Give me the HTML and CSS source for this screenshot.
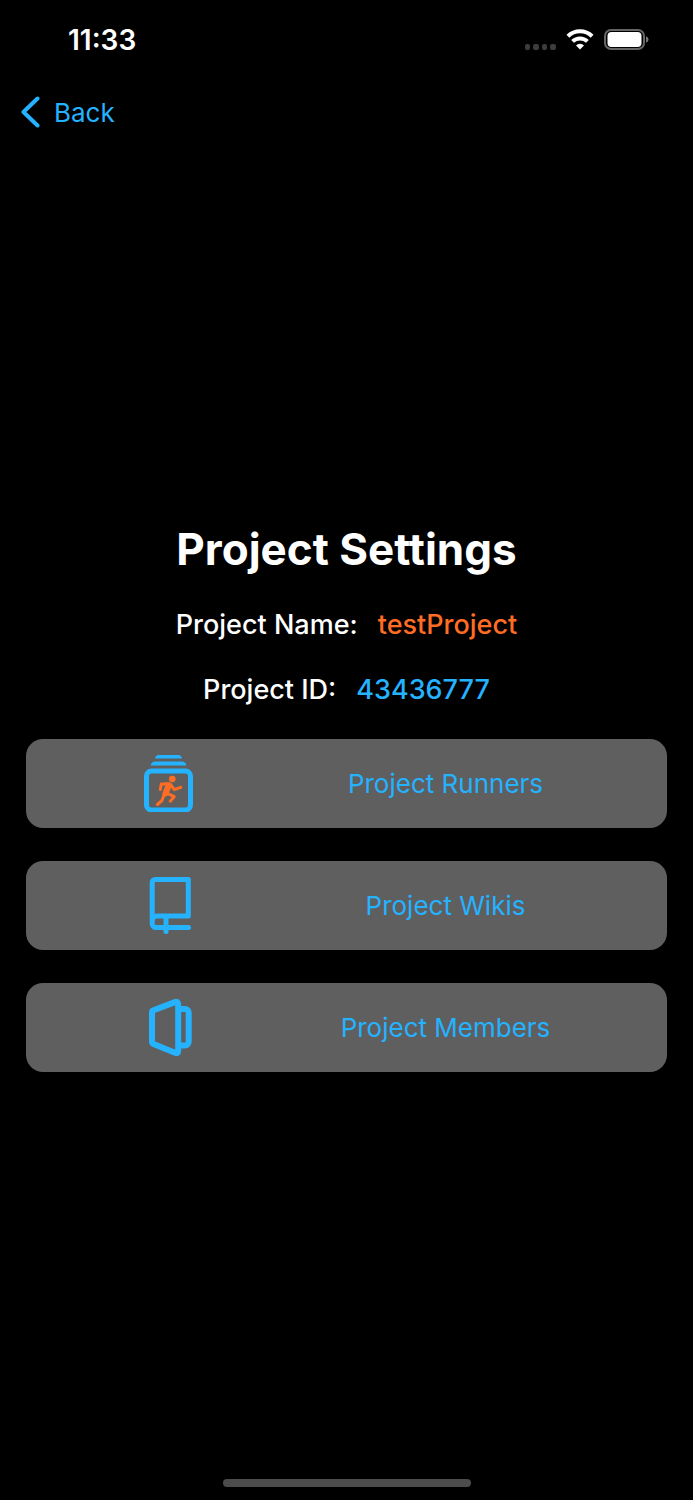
FILE: index.html
```html
<!DOCTYPE html>
<html lang="en">
<head>
<meta charset="utf-8">
<meta name="viewport" content="width=device-width, initial-scale=1">
<title>Project Settings</title>
<link rel="stylesheet" href="styles.css">
</head>
<body>
<div class="screen">
  <header class="status">
    <time class="clock">11:33</time>
    <div class="indicators">
      <svg class="signal" width="32" height="6" viewBox="0 0 32 6" aria-hidden="true">
        <rect x="1" y="0" width="5" height="6" rx="2"/><rect x="9" y="0" width="6" height="6" rx="2"/><rect x="18" y="0" width="5" height="6" rx="2"/><rect x="26" y="0" width="6" height="6" rx="2"/>
      </svg>
      <svg class="wifi" width="28" height="22" viewBox="0 0 28 22" aria-hidden="true">
        <path d="M1.900 7.200a17.300 17.300 0 0 1 24.200 0M6.600 12.400a10.600 10.600 0 0 1 14.800 0"/>
        <path class="wifi-dot" d="M14 20.400l-4-4a5.600 5.600 0 0 1 8 0z"/>
      </svg>
      <svg class="battery" width="45" height="22" viewBox="0 0 45 22" aria-hidden="true">
        <rect class="battery-case" x="1" y="1" width="39" height="19" rx="6"/>
        <rect class="battery-level" x="3.500" y="3" width="34" height="15" rx="4"/>
        <path class="battery-cap" d="M42 7.200q2.500 1 2.500 3.300t-2.500 3.300z"/>
      </svg>
    </div>
  </header>
  <nav class="nav">
    <button class="back" type="button">
      <svg width="20" height="32" viewBox="0 0 20 32" aria-hidden="true"><path d="M17.500 2.500L3.500 16l14 13.500"/></svg>
      <span class="label">Back</span>
    </button>
  </nav>
  <main class="content">
    <h1 class="title">Project Settings</h1>
    <dl class="facts">
      <div class="fact"><dt>Project Name:</dt><dd class="name">testProject</dd></div>
      <div class="fact"><dt>Project ID:</dt><dd class="id">43436777</dd></div>
    </dl>
    <div class="actions">
      <button class="action" type="button">
        <svg class="icon" viewBox="8 10 61 57" aria-hidden="true">
          <path class="fill" d="M25 13.500q.7-3.500 3.500-3.500h20q2.800 0 3.500 3.500zM20.500 20.500q1.200-4 4-4h28q2.800 0 4 4z"/>
          <rect class="line" x="16.500" y="26" width="44" height="39" rx="5"/>
          <circle class="runner-head" cx="42.300" cy="34" r="3.300"/>
          <path class="runner" d="M30.300 44.500l1-5.500 6-.2 3.200.7 3.800 5.200 6.400-2.300"/>
          <path class="runner torso" d="M38.700 40.300l-3.200 8.200"/>
          <path class="runner" d="M36.500 48l7.700 3.700-4 4.500M34.500 48.500l-2.500 7-4.600 4"/>
        </svg>
        <span class="label">Project Runners</span>
      </button>
      <button class="action" type="button">
        <svg class="icon" viewBox="8 12 61 57" aria-hidden="true">
          <path class="line" d="M58.500 62.500H26a3.800 3.800 0 0 1-3.800-3.800V17.500a3 3 0 0 1 3-3H58.300V51H27a4.600 4.600 0 0 0-4.600 4.600M36 51v15.500"/>
        </svg>
        <span class="label">Project Wikis</span>
      </button>
      <button class="action" type="button">
        <svg class="icon" viewBox="8 11 61 57" aria-hidden="true">
          <path class="line bold" d="M22 24.500q0-1.500 1.500-2.200L45 14.100q3.200-1 3.200 2.200v46.500q0 3.200-3.200 2L23.500 56q-1.500-.7-1.500-2.200zM49 21h6a3.700 3.700 0 0 1 3.700 3.700v29a3.700 3.700 0 0 1-3.700 3.700h-6"/>
        </svg>
        <span class="label">Project Members</span>
      </button>
    </div>
  </main>
  <footer class="home"><div class="home-bar"></div></footer>
</div>
</body>
</html>
```
FILE: styles.css
```css
* { box-sizing: border-box; }
body {
  margin: 0;
  background: #000;
  color: #fff;
  font: 400 27px/32px Inter, "Liberation Sans", sans-serif;
}
button {
  border: 0;
  background: none;
  color: #25b2ff;
  font: inherit;
  font-size: 26px;
  cursor: pointer;
}
.screen {
  min-height: 100vh;
  display: flex;
  flex-direction: column;
}
.status {
  height: 80px;
  padding: 0 44px 0 68px;
  display: flex;
  align-items: center;
  justify-content: space-between;
}
.clock { font-size: 28px; font-weight: 600; }
.indicators { display: flex; align-items: center; gap: 10px; }
.signal { fill: #3c3c3c; margin-top: 14px; }
.wifi { fill: none; stroke: #fff; stroke-width: 4; }
.wifi-dot { fill: #fff; stroke: none; }
.battery-case { fill: none; stroke: #666; stroke-width: 2; }
.battery-level { fill: #fff; }
.battery-cap { fill: #777; }
.nav { height: 64px; padding: 0 20px; display: flex; align-items: center; }
.back { padding: 0; display: flex; align-items: center; gap: 14px; }
.back svg {
  fill: none;
  stroke: #25b2ff;
  stroke-width: 4;
  stroke-linecap: round;
  stroke-linejoin: round;
}
.content {
  flex: 1;
  padding: 0 26px 30px;
  display: flex;
  flex-direction: column;
  justify-content: center;
}
.title {
  margin: 0 0 33px;
  font-size: 44px;
  line-height: 54px;
  font-weight: 700;
  text-align: center;
}
.facts {
  margin: 0 0 33px;
  display: flex;
  flex-direction: column;
  gap: 33px;
  font-weight: 500;
}
.fact { display: flex; justify-content: center; gap: 20px; }
.fact dd { margin: 0; }
.name { color: #ff6d24; }
.id { color: #25b2ff; }
.actions { display: flex; flex-direction: column; gap: 33px; }
.action {
  padding: 16px 83px 16px 4px;
  display: grid;
  grid-template-columns: 1fr 1fr;
  align-items: center;
  justify-items: center;
  border-radius: 17px;
  background: #5f5f5f;
  white-space: nowrap;
}
.label { padding-top: 2px; }
.icon { display: block; width: 61px; height: 57px; }
.fill { fill: #25b2ff; }
.line { fill: none; stroke: #25b2ff; stroke-width: 5; stroke-linejoin: round; stroke-linecap: round; }
.bold { stroke-width: 6; }
.runner-head { fill: #ff6d24; }
.runner { fill: none; stroke: #ff6d24; stroke-width: 3; stroke-linecap: round; stroke-linejoin: round; }
.torso { stroke-width: 6; }
.home { padding: 0 0 13px; display: flex; justify-content: center; }
.home-bar { width: 248px; height: 8px; border-radius: 4px; background: #4c4c4c; }
```
